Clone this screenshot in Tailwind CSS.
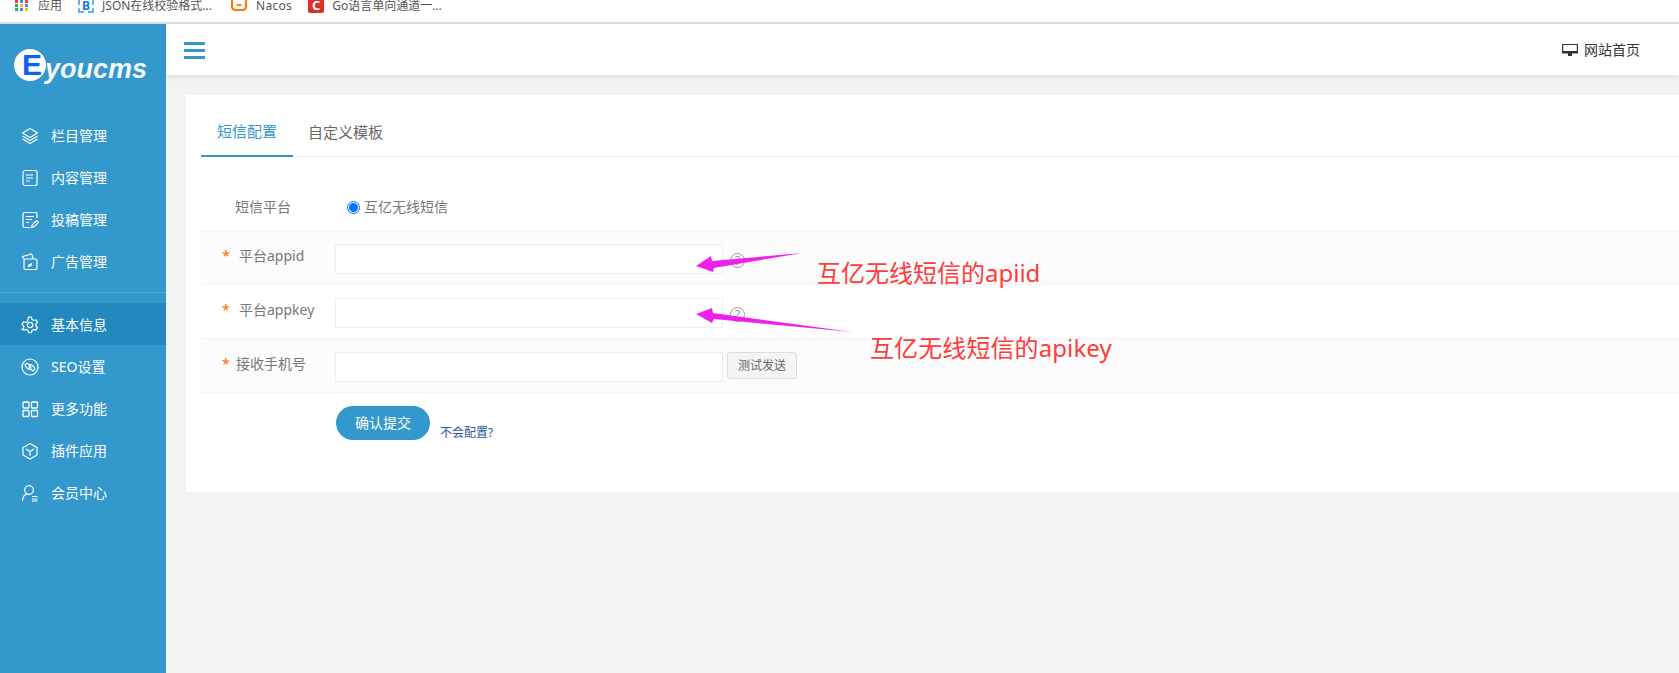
<!DOCTYPE html>
<html lang="zh-CN">
  <head>
    <meta charset="UTF-8" />
    <title>短信配置</title>
    <script src="https://cdn.jsdelivr.net/npm/@tailwindcss/browser@4"></script>
  </head>
  <body class="bg-[#f3f3f3] font-['Noto_Sans','Noto_Sans_CJK_SC',sans-serif]">
    <div class="relative flex h-[673px] w-[1679px] flex-col overflow-hidden">
      <!-- 书签栏 -->
      <div class="flex h-6 shrink-0 items-start overflow-hidden border-b-2 border-[#dedede] bg-white text-xs leading-3 text-[#555]">
        <div class="flex items-start">
          <svg class="ml-[15px] w-[13px] h-[11px]" viewBox="0 0 13 11">
            <rect x="0" y="0" width="3" height="3" fill="#ea4335" /><rect x="5" y="0" width="3" height="3" fill="#4285f4" /><rect x="10" y="0" width="3" height="3" fill="#ea4335" />
            <rect x="0" y="4" width="3" height="3" fill="#34a853" /><rect x="5" y="4" width="3" height="3" fill="#fbbc05" /><rect x="10" y="4" width="3" height="3" fill="#4285f4" />
            <rect x="0" y="8" width="3" height="3" fill="#34a853" /><rect x="5" y="8" width="3" height="3" fill="#4285f4" /><rect x="10" y="8" width="3" height="3" fill="#fbbc05" />
          </svg>
          <span class="ml-[10px]">应用</span>
        </div>
        <div class="ml-[16px] flex items-start">
          <div class="relative h-[13px] w-4 border-x-2 border-b-2 border-dashed border-[#58b4f5] text-center text-[12px] font-bold leading-[11px] text-[#1976d2]">B</div>
          <span class="ml-[8px] w-[116px]">JSON在线校验格式...</span>
        </div>
        <div class="ml-[13px] flex items-start">
          <svg class="h-[11px] w-4" viewBox="0 0 16 11" fill="none">
            <path d="M1 0v6.500a3.500 3.500 0 0 0 3.500 3.500h7a3.500 3.500 0 0 0 3.500-3.500V0" stroke="#ff7a00" stroke-width="2.200" />
            <path d="M5.500 5h5" stroke="#ff7a00" stroke-width="1.800" />
          </svg>
          <span class="ml-[9px] tracking-[0.3px]">Nacos</span>
        </div>
        <div class="ml-[16px] flex items-start">
          <div class="flex h-[13px] w-4 items-start justify-center rounded-b-[2px] bg-[#d9322a] text-[13px] font-bold leading-[11px] text-white">C</div>
          <span class="ml-2">Go语言单向通道一...</span>
        </div>
      </div>

      <div class="flex min-h-0 flex-1">
        <!-- 侧边栏 -->
        <aside class="w-[166px] shrink-0 bg-[#3398cc] text-sm text-white">
          <div class="flex h-[91px] items-start pl-[14px] pt-[25px]">
            <div class="flex h-8 w-8 shrink-0 items-center justify-start rounded-full bg-white pl-2 font-['Liberation_Sans',sans-serif] text-[30px] font-bold leading-8 text-[#0a66e8]">E</div>
            <span class="-ml-[1px] mt-[6px] font-['Liberation_Sans',sans-serif] text-[27px] font-bold italic leading-7 text-white/95">youcms</span>
          </div>

          <a class="flex h-[42px] items-center pl-[21px]">
            <svg class="h-[18px] w-[18px]" viewBox="0 0 18 18" fill="none" stroke="#fff" stroke-width="1.200" stroke-linejoin="round"><path d="M9 1.500 16.500 6 9 10.500 1.500 6z" /><path d="M1.500 9 9 13.500 16.500 9" /><path d="M1.500 12 9 16.500 16.500 12" /></svg>
            <span class="ml-[12px]">栏目管理</span>
          </a>
          <a class="flex h-[42px] items-center pl-[21px]">
            <svg class="h-[18px] w-[18px]" viewBox="0 0 18 18" fill="none" stroke="#fff" stroke-width="1.200"><rect x="2" y="1.500" width="14" height="15" rx="2" /><path d="M5 6h7M5 9h7M5 12h4" /></svg>
            <span class="ml-[12px]">内容管理</span>
          </a>
          <a class="flex h-[42px] items-center pl-[21px]">
            <svg class="h-[18px] w-[18px]" viewBox="0 0 18 18" fill="none" stroke="#fff" stroke-width="1.200"><path d="M9 16.500H3.500a1.500 1.500 0 0 1-1.500-1.500V3a1.500 1.500 0 0 1 1.500-1.500h11A1.500 1.500 0 0 1 16 3v4" /><path d="M5 5.500h8M5 8.500h6M5 11.500h3" /><path d="m10.500 16.500 1-3 4-4 2 2-4 4z" /></svg>
            <span class="ml-[12px]">投稿管理</span>
          </a>
          <a class="flex h-[42px] items-center pl-[21px]">
            <svg class="h-[18px] w-[18px]" viewBox="0 0 18 18" fill="none" stroke="#fff" stroke-width="1.200"><rect x="3" y="6" width="13" height="10.500" rx="1.500" /><path d="M3 6 1.500 3.500l9-2.500 2 5" /><path d="m7 12.500 4-2M7 14l4-2" /></svg>
            <span class="ml-[12px]">广告管理</span>
          </a>

          <div class="mt-[9px] h-px bg-white/15"></div>

          <a class="mt-[10px] flex h-[42px] items-center bg-[#2288bd] pl-[21px] pt-[2px]">
            <svg class="h-[18px] w-[18px]" viewBox="0 0 18 18" fill="none" stroke="#fff" stroke-width="1.200" stroke-linejoin="round"><path d="M7.500 1.500h3l.5 2.300 1.700 1 2.300-.7 1.500 2.600-1.700 1.600v2l1.700 1.500-1.500 2.600-2.300-.7-1.700 1-.5 2.300h-3l-.5-2.300-1.700-1-2.300.7L1 13.800l1.700-1.500v-2L1 8.700l1.500-2.600 2.300.7 1.700-1z" transform="translate(0 -.3)" /><circle cx="9" cy="9" r="2.700" /></svg>
            <span class="ml-[12px]">基本信息</span>
          </a>
          <a class="flex h-[42px] items-center pl-[21px] pt-[2px]">
            <svg class="h-[18px] w-[18px]" viewBox="0 0 18 18" fill="none" stroke="#fff" stroke-width="1.200"><circle cx="9" cy="9" r="8" /><rect x="3.800" y="6.500" width="6.500" height="3.600" rx="1.800" transform="rotate(45 7 8.300)" /><rect x="7.700" y="7.900" width="6.500" height="3.600" rx="1.800" transform="rotate(45 11 9.700)" /></svg>
            <span class="ml-[12px]">SEO设置</span>
          </a>
          <a class="flex h-[42px] items-center pl-[21px] pt-[2px]">
            <svg class="h-[18px] w-[18px]" viewBox="0 0 18 18" fill="none" stroke="#fff" stroke-width="1.300"><rect x="2" y="2" width="6" height="6" rx=".8" /><rect x="10.500" y="2" width="6" height="6" rx=".8" /><rect x="2" y="10.500" width="6" height="6" rx=".8" /><rect x="10.500" y="10.500" width="6" height="6" rx=".8" /></svg>
            <span class="ml-[12px]">更多功能</span>
          </a>
          <a class="flex h-[42px] items-center pl-[21px] pt-[2px]">
            <svg class="h-[18px] w-[18px]" viewBox="0 0 18 18" fill="none" stroke="#fff" stroke-width="1.200" stroke-linejoin="round"><path d="M9 1.500 16 5.500v7.500L9 17 2 13V5.500z" /><path d="M5 7 9 9.500 13 7M9 9.500V14" /></svg>
            <span class="ml-[12px]">插件应用</span>
          </a>
          <a class="flex h-[42px] items-center pl-[21px] pt-[2px]">
            <svg class="h-[18px] w-[18px]" viewBox="0 0 18 18" fill="none" stroke="#fff" stroke-width="1.200"><circle cx="8" cy="6" r="4.300" /><path d="M1.500 17c0-4 2-6.500 5-7" /><path d="M11 12.500h5.500M11 15h5.500M11 17h5.500" /></svg>
            <span class="ml-[12px]">会员中心</span>
          </a>
        </aside>

        <div class="min-w-0 flex-1">
          <!-- 顶部栏 -->
          <header class="flex h-[51px] items-center justify-between bg-white pl-[18px] pr-[39px] shadow-[0_2px_5px_rgba(0,0,0,0.08)]">
            <div class="mt-[2px] flex w-[21px] flex-col gap-1">
              <div class="h-[3px] bg-[#3398cc]"></div>
              <div class="h-[3px] bg-[#3398cc]"></div>
              <div class="h-[3px] bg-[#3398cc]"></div>
            </div>
            <a class="flex items-center text-sm text-[#333]">
              <svg class="h-[12px] w-[16px]" viewBox="0 0 16 12"><rect x="0" y="0" width="16" height="9" rx="1" fill="#333" /><rect x="1.200" y="1" width="13.600" height="6.500" fill="#fff" /><rect x="0" y="7" width="16" height="2.500" fill="#333" /><rect x="6" y="9" width="4" height="3" fill="#333" /></svg>
              <span class="ml-[6px]">网站首页</span>
            </a>
          </header>

          <!-- 内容卡片 -->
          <main class="ml-5 mt-5 h-[397px] bg-white pl-[15px]">
            <div class="flex h-[62px] items-end border-b border-[#eee] pt-4 text-[15px]">
              <div class="-mb-px flex h-[44px] w-[92px] items-center justify-center border-b-2 border-[#3398cc] pb-[6px] text-[#3398cc]">短信配置</div>
              <div class="-mb-px ml-[15px] flex h-[44px] items-center pb-[6px] text-[#666]">自定义模板</div>
            </div>

            <form class="text-sm text-[#777]">
              <div class="flex h-[74px] items-end pb-[10px]">
                <div class="w-[146px] pb-[4px] pl-[34px] leading-5">短信平台</div>
                <div class="flex items-center pb-[4px] leading-5">
                  <span class="flex h-[13px] w-[13px] items-center justify-center rounded-full border border-[#0075ff] bg-white"><span class="h-[9px] w-[9px] rounded-full bg-[#0075ff]"></span></span>
                  <span class="ml-1">互亿无线短信</span>
                </div>
              </div>

              <div class="flex h-[54px] items-start border-y border-[#f5f5f5] bg-[#fcfcfc]">
                <div class="flex w-[134px] pl-[21px] pt-[14px] leading-5"><span class="w-[17px] text-[#ff6a00]">*</span>平台appid</div>
                <input class="mt-3 h-[30px] w-[388px] border border-[#eee] bg-white" />
                <span class="ml-[7px] mt-[21px] flex h-[15px] w-[15px] items-center justify-center rounded-full border border-[#999] text-[12px] leading-none text-[#999]">?</span>
              </div>
              <div class="flex h-[54px] items-start border-b border-[#f5f5f5]">
                <div class="flex w-[134px] pl-[21px] pt-[15px] leading-5"><span class="w-[17px] text-[#ff6a00]">*</span>平台appkey</div>
                <input class="mt-[13px] h-[30px] w-[388px] border border-[#eee] bg-white" />
                <span class="ml-[7px] mt-[22px] flex h-[15px] w-[15px] items-center justify-center rounded-full border border-[#999] text-[12px] leading-none text-[#999]">?</span>
              </div>
              <div class="flex h-[54px] items-start border-b border-[#f5f5f5] bg-[#fcfcfc]">
                <div class="flex w-[134px] pl-[21px] pt-[15px] leading-5"><span class="w-[13px] text-[#ff6a00]">*</span><span class="pl-[1px]">接收手机号</span></div>
                <input class="mt-[13px] h-[30px] w-[388px] border border-[#eee] bg-white" />
                <button type="button" class="ml-[4px] mt-[13px] h-[27px] w-[70px] rounded-[3px] border border-[#ddd] bg-[#f5f5f5] text-xs text-[#666]">测试发送</button>
              </div>

              <div class="flex h-[50px] items-start pl-[135px] pt-[13px]">
                <button type="button" class="h-[34px] w-[94px] rounded-[17px] bg-[#3398cc] text-[14px] text-white">确认提交</button>
                <a class="ml-[10px] mt-[19px] text-xs leading-4 text-[#2c5aa0]">不会配置?</a>
              </div>
            </form>
          </main>
        </div>
      </div>

      <!-- 截图上的标注 -->
      <svg class="absolute left-0 top-0 h-[673px] w-[1679px]" viewBox="0 0 1679 673">
        <polygon points="696,266 711,256 712,261 802,253 714,268 713,272" fill="#f020ec" />
        <polygon points="696,314 712,308 713,313 852,332 714,319 712,323" fill="#f020ec" />
      </svg>
      <div class="absolute left-[817px] top-[257px] text-2xl leading-8 text-[#ff3b3b]">互亿无线短信的apiid</div>
      <div class="absolute left-[870px] top-[332px] text-2xl leading-8 tracking-[0.1px] text-[#ff3b3b]">互亿无线短信的apikey</div>
    </div>
  </body>
</html>
